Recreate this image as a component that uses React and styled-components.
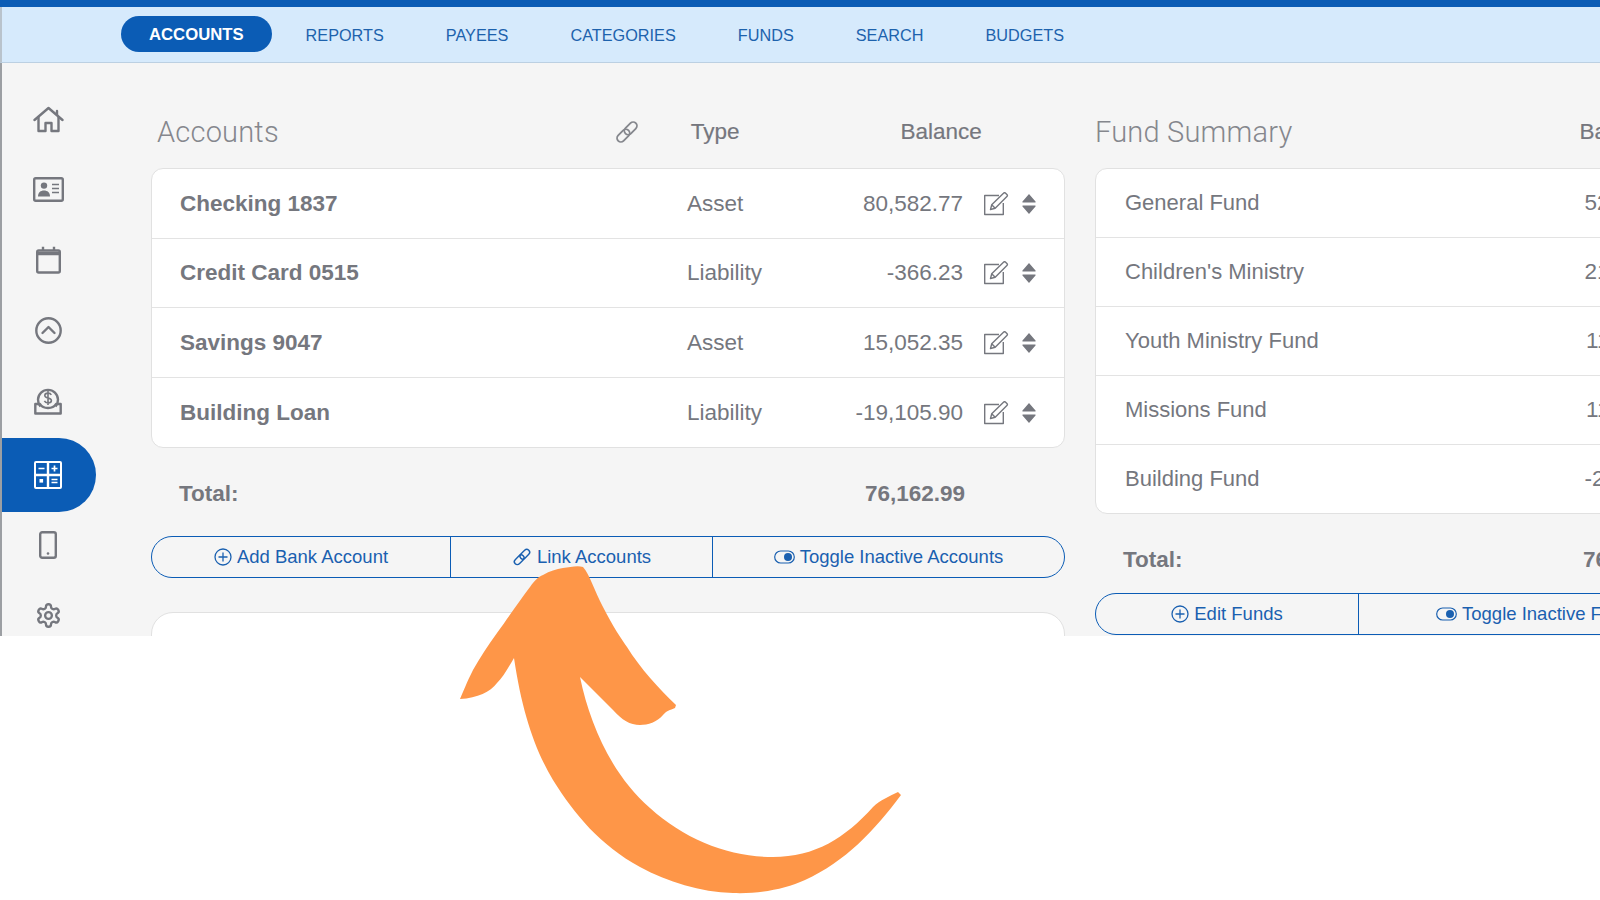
import React from 'react';
import styled, { createGlobalStyle } from 'styled-components';

const GlobalStyle = createGlobalStyle`
  html, body { margin: 0; padding: 0; background: #fff; }
  * { box-sizing: border-box; }
  body { font-family: "Liberation Sans", Arial, sans-serif; }
`;

const GREY = '#75777e';
const BLUE = '#0b5cb5';

const navItems = ['ACCOUNTS', 'REPORTS', 'PAYEES', 'CATEGORIES', 'FUNDS', 'SEARCH', 'BUDGETS'];

const accounts = [
  { name: 'Checking 1837', type: 'Asset', balance: '80,582.77' },
  { name: 'Credit Card 0515', type: 'Liability', balance: '-366.23' },
  { name: 'Savings 9047', type: 'Asset', balance: '15,052.35' },
  { name: 'Building Loan', type: 'Liability', balance: '-19,105.90' },
];

const funds = [
  { name: 'General Fund', balance: '52,318.40' },
  { name: "Children's Ministry", balance: '21,006.15' },
  { name: 'Youth Ministry Fund', balance: '11,272.09' },
  { name: 'Missions Fund', balance: '11,566.35' },
  { name: 'Building Fund', balance: '-20,000.00' },
];

const HomeIcon = () => (
  <svg width="31" height="27" viewBox="0 0 31 27" fill="none" stroke="currentColor" strokeWidth="2.4" strokeLinejoin="round" strokeLinecap="round">
    <path d="M1.5 14 15.5 2l14 12" />
    <path d="M5.5 11v14h7v-8h6v8h7V11" />
    <path d="M24 5v3.5" />
  </svg>
);

const CardIcon = () => (
  <svg width="31" height="25" viewBox="0 0 31 25" fill="none" stroke="currentColor" strokeWidth="2.4">
    <rect x="1.2" y="1.2" width="28.6" height="22.6" rx="1.5" />
    <circle cx="11" cy="8.6" r="3.2" fill="currentColor" stroke="none" />
    <path d="M5 19.5c0-4 2.5-6 6-6s6 2 6 6z" fill="currentColor" stroke="none" />
    <path d="M19 7.5h7M19 11.5h7M19 15.5h7" strokeWidth="1.5" />
  </svg>
);

const CalendarIcon = () => (
  <svg width="25" height="28" viewBox="0 0 25 28" fill="none" stroke="currentColor" strokeWidth="2.4">
    <rect x="1.2" y="4.5" width="22.6" height="22" rx="1.5" />
    <path d="M1.2 7.5h22.6" strokeWidth="3.5" />
    <path d="M7 .8v4M18 .8v4" strokeWidth="2.4" />
  </svg>
);

const UpIcon = () => (
  <svg width="27" height="27" viewBox="0 0 27 27" fill="none" stroke="currentColor" strokeWidth="2.4" strokeLinecap="round" strokeLinejoin="round">
    <circle cx="13.5" cy="13.5" r="12.2" />
    <path d="M7.5 16 13.5 10l6 6" />
  </svg>
);

const CoinIcon = () => (
  <svg width="28" height="28" viewBox="0 0 28 28" fill="none" stroke="currentColor" strokeWidth="2.4" strokeLinejoin="round">
    <path d="M6.5 19.5a10 10 0 1 1 15 0" />
    <path d="M6 17H1.3v9.5h25.4V17H22c-1.5 2.5-4.5 4-8 4s-6.500-1.500-8-4z" />
    <path d="M17.300 7.800c-.6-1.200-1.800-1.700-3.300-1.700-1.800 0-3.200.9-3.200 2.400 0 3.300 6.600 1.500 6.600 4.900 0 1.600-1.500 2.500-3.400 2.500-1.700 0-3-.7-3.600-2M14 4v14" strokeWidth="1.6" />
  </svg>
);

const CalculatorIcon = () => (
  <svg width="28" height="28" viewBox="0 0 28 28" fill="none" stroke="#fff" strokeWidth="2">
    <rect x="1" y="1" width="26" height="26" rx="1" />
    <path d="M14 1v26M1 14h26" strokeWidth="2.4" />
    <path d="M4.500 7.500h6M17.500 7.500h6M20.500 4.500v6M17.500 18.500h6M17.500 21.500h6" strokeWidth="1.7" />
    <rect x="5.500" y="18" width="3.600" height="3.600" fill="#fff" stroke="none" />
  </svg>
);

const PhoneIcon = () => (
  <svg width="18" height="28" viewBox="0 0 18 28" fill="none" stroke="currentColor" strokeWidth="2.4">
    <rect x="1.200" y="1.200" width="15.600" height="25.600" rx="2" />
    <circle cx="9" cy="22.500" r="1.300" fill="currentColor" stroke="none" />
  </svg>
);

const GearIcon = () => (
  <svg width="27" height="27" viewBox="0 0 24 24" fill="none" stroke="currentColor" strokeWidth="2.1" strokeLinecap="round" strokeLinejoin="round">
    <path d="M12.220 2h-.44a2 2 0 0 0-2 2v.18a2 2 0 0 1-1 1.730l-.43.250a2 2 0 0 1-2 0l-.150-.080a2 2 0 0 0-2.730.730l-.220.380a2 2 0 0 0 .730 2.730l.150.100a2 2 0 0 1 1 1.720v.510a2 2 0 0 1-1 1.740l-.150.090a2 2 0 0 0-.730 2.730l.220.380a2 2 0 0 0 2.730.730l.150-.080a2 2 0 0 1 2 0l.430.250a2 2 0 0 1 1 1.730V20a2 2 0 0 0 2 2h.440a2 2 0 0 0 2-2v-.180a2 2 0 0 1 1-1.730l.430-.250a2 2 0 0 1 2 0l.150.080a2 2 0 0 0 2.730-.730l.220-.390a2 2 0 0 0-.730-2.730l-.150-.080a2 2 0 0 1-1-1.740v-.500a2 2 0 0 1 1-1.740l.150-.090a2 2 0 0 0 .730-2.730l-.220-.380a2 2 0 0 0-2.730-.730l-.150.080a2 2 0 0 1-2 0l-.430-.250a2 2 0 0 1-1-1.730V4a2 2 0 0 0-2-2z" />
    <circle cx="12" cy="12" r="3" />
  </svg>
);

const LinkIcon = ({ size = 24 }) => (
  <svg width={size} height={size} viewBox="0 0 24 24" fill="none" stroke="currentColor" strokeWidth="1.700">
    <g transform="rotate(-45 12 12)">
      <rect x="0.500" y="8.500" width="13.500" height="7" rx="3.500" />
      <rect x="10" y="8.500" width="13.500" height="7" rx="3.500" />
    </g>
  </svg>
);

const PlusIcon = () => (
  <svg width="18" height="18" viewBox="0 0 18 18" fill="none" stroke="currentColor" strokeWidth="1.300">
    <circle cx="9" cy="9" r="8" />
    <path d="M9 4.500v9M4.500 9h9" />
  </svg>
);

const ToggleIcon = () => (
  <svg width="21" height="14" viewBox="0 0 21 14" fill="none" stroke="currentColor" strokeWidth="1.200">
    <rect x="0.700" y="1" width="19.600" height="12" rx="6" />
    <circle cx="14" cy="7" r="4" fill="currentColor" stroke="none" />
  </svg>
);

const EditIcon = () => (
  <svg width="26" height="24" viewBox="0 0 26 24" fill="none" stroke="currentColor" strokeWidth="1.400" strokeLinejoin="round">
    <path d="M16 3.500H1.700v19h18.600V11" />
    <path d="M7.500 17.500l1.200-4.700L20.500 1.200a1.500 1.500 0 0 1 2.100 0l1.300 1.300a1.500 1.500 0 0 1 0 2.100L12.200 16.300z" />
    <path d="M8.700 12.800l3.500 3.500" />
  </svg>
);

const SortIcon = () => (
  <svg width="14" height="20" viewBox="0 0 14 20" fill="currentColor">
    <path d="M7 0l6.500 7.500a.6.600 0 0 1-.5 1H1a.6.600 0 0 1-.5-1z" />
    <path d="M7 20 .5 12.500a.6.600 0 0 1 .5-1h12a.6.600 0 0 1 .5 1z" />
  </svg>
);

const sideIcons = [
  { key: 'home', icon: <HomeIcon /> },
  { key: 'people', icon: <CardIcon /> },
  { key: 'calendar', icon: <CalendarIcon /> },
  { key: 'up', icon: <UpIcon /> },
  { key: 'giving', icon: <CoinIcon /> },
  { key: 'accounting', icon: <CalculatorIcon />, active: true },
  { key: 'phone', icon: <PhoneIcon /> },
  { key: 'settings', icon: <GearIcon /> },
];

const App = () => {
  return (
    <Page>
      <GlobalStyle />
      <Frame>
        <TopStripe />
        <NavBar>
          {navItems.map((item, i) => (
            <NavItem key={item} $active={i === 0}>{item}</NavItem>
          ))}
        </NavBar>
        <Body>
          <Sidebar>
            {sideIcons.map((item) => (
              <SideItem key={item.key} $active={item.active}>{item.icon}</SideItem>
            ))}
          </Sidebar>
          <Main>
            <Column>
              <HeaderRow>
                <Title $inset>Accounts</Title>
                <HeaderLink><LinkIcon size={26} /></HeaderLink>
                <HeaderType>Type</HeaderType>
                <HeaderBalance>Balance</HeaderBalance>
              </HeaderRow>
              <Card>
                {accounts.map((a) => (
                  <AccountRow key={a.name}>
                    <AccountName>{a.name}</AccountName>
                    <AccountType>{a.type}</AccountType>
                    <Amount>{a.balance}</Amount>
                    <EditSlot><EditIcon /></EditSlot>
                    <SortSlot><SortIcon /></SortSlot>
                  </AccountRow>
                ))}
              </Card>
              <TotalRow>
                <TotalLabel>Total:</TotalLabel>
                <TotalValue>76,162.99</TotalValue>
              </TotalRow>
              <ButtonGroup $top={26} $columns="299px 262px 1fr">
                <GroupButton><PlusIcon />Add Bank Account</GroupButton>
                <GroupButton><LinkIcon size={20} />Link Accounts</GroupButton>
                <GroupButton><ToggleIcon />Toggle Inactive Accounts</GroupButton>
              </ButtonGroup>
              <EmptyCard />
            </Column>
            <Column>
              <HeaderRow>
                <Title>Fund Summary</Title>
                <FundHeaderBalance>Balance</FundHeaderBalance>
              </HeaderRow>
              <Card>
                {funds.map((f) => (
                  <FundRow key={f.name}>
                    <FundName>{f.name}</FundName>
                    <FundAmount>{f.balance}</FundAmount>
                  </FundRow>
                ))}
              </Card>
              <TotalRow>
                <TotalLabel>Total:</TotalLabel>
                <FundTotalValue>76,162.99</FundTotalValue>
              </TotalRow>
              <ButtonGroup $top={17} $columns="263px 360px">
                <GroupButton><PlusIcon />Edit Funds</GroupButton>
                <GroupButton><ToggleIcon />Toggle Inactive Funds</GroupButton>
              </ButtonGroup>
            </Column>
          </Main>
        </Body>
      </Frame>
      <Arrow viewBox="455 560 450 340">
        <path
          fill="#fe9648"
          d="M583 567 C590 575 594 590 603 607 C612 625 622 640 627 647 C640 668 660 690 676 705 L675 708 C670 710 666 711 663 715 C657 722 648 725 640 725 C630 725 622 720 613 710 L580 677 C590 725 612 775 650 808 C685 840 730 857 773 857 C815 857 845 838 873 807 C880 800 890 796 898 792 L901 795 C875 830 845 862 805 880 C785 889 760 894 733 893 C700 892 668 882 640 867 C600 845 575 815 553 780 C535 750 522 712 514 658 C508 668 503 677 497 683 C490 692 478 698 460 699 C463 692 467 682 473 670 C480 658 488 645 497 633 C510 615 520 600 530 587 C535 580 538 577 543 575 C550 571 556 569 563 568 C570 567 578 565 583 567 Z"
        />
      </Arrow>
    </Page>
  );
};

const Page = styled.div`
  position: relative;
  width: 1600px;
  height: 900px;
  background: #fff;
  overflow: hidden;
`;

const Frame = styled.div`
  height: 636px;
  background: #f5f5f5;
  overflow: hidden;
`;

const TopStripe = styled.div`
  height: 7px;
  background: ${BLUE};
`;

const NavBar = styled.nav`
  display: flex;
  align-items: center;
  gap: 6px;
  height: 56px;
  padding: 0 0 1px 119px;
  background: #d6eafc;
  border-left: 2px solid #b9c3cc;
  border-bottom: 1px solid #bcd0e2;
`;

const NavItem = styled.a`
  display: flex;
  align-items: center;
  height: 36px;
  padding: 2px 28px 0;
  border-radius: 18px;
  font-size: ${(p) => (p.$active ? '16.7px' : '16.25px')};
  font-weight: ${(p) => (p.$active ? 700 : 400)};
  color: ${(p) => (p.$active ? '#fff' : '#1d62ad')};
  background: ${(p) => (p.$active ? BLUE : 'transparent')};
`;

const Body = styled.div`
  display: flex;
  height: 573px;
  border-left: 2px solid #9c9fa3;
`;

const Sidebar = styled.aside`
  flex: 0 0 96px;
  display: flex;
  flex-direction: column;
  padding: 21px 2px 0 0;
  color: ${GREY};
`;

const SideItem = styled.div`
  flex: 0 0 ${(p) => (p.$active ? '74px' : '70.4px')};
  margin: ${(p) => (p.$active ? '2px 0 -2px' : '0')};
  display: flex;
  align-items: center;
  justify-content: center;
  padding-right: 2px;
  border-radius: 0 37px 37px 0;
  background: ${(p) => (p.$active ? BLUE : 'transparent')};
`;

const Main = styled.main`
  display: flex;
  gap: 30px;
  padding: 42px 0 0 53px;
`;

const Column = styled.section`
  flex: 0 0 914px;
`;

const HeaderRow = styled.div`
  display: flex;
  align-items: center;
  height: 54px;
  margin-bottom: 9px;
  color: ${GREY};
  font-size: 22.5px;
  -webkit-text-stroke: 0.2px ${GREY};
`;

const Title = styled.h2`
  margin: 0;
  padding-left: ${(p) => (p.$inset ? '6px' : '0')};
  font-family: Roboto, "Liberation Sans", sans-serif;
  font-size: 29px;
  font-weight: 300;
  letter-spacing: 0.2px;
  color: #85878d;
  -webkit-text-stroke: 0;
`;

const HeaderLink = styled.span`
  display: flex;
  margin-left: 335px;
  color: #85878d;
`;

const HeaderType = styled.span`
  margin-left: 51px;
`;

const HeaderBalance = styled.span`
  margin-left: 161px;
`;

const FundHeaderBalance = styled.span`
  margin-left: 287px;
`;

const Card = styled.div`
  background: #fff;
  border: 1.5px solid #e1e1e1;
  border-radius: 12px;
  overflow: hidden;
`;

const AccountRow = styled.div`
  display: flex;
  align-items: center;
  height: 69.5px;
  padding: 1px 0 0 28px;
  border-bottom: 1.5px solid #e3e3e3;
  color: ${GREY};
  font-size: 22.5px;
  &:last-child { height: 69.5px; border-bottom: 0; }
`;

const AccountName = styled.span`
  flex: 0 0 507px;
  font-weight: 700;
`;

const AccountType = styled.span`
  flex: 1;
`;

const Amount = styled.span`
  text-align: right;
`;

const EditSlot = styled.span`
  display: flex;
  margin-left: 20px;
`;

const SortSlot = styled.span`
  display: flex;
  margin: 0 28px 0 13px;
`;

const FundRow = styled.div`
  display: flex;
  align-items: center;
  height: 69px;
  padding-left: 29px;
  border-bottom: 1.5px solid #e3e3e3;
  color: ${GREY};
  font-size: 22.5px;
  &:last-child { height: 67.5px; border-bottom: 0; }
`;

const FundName = styled.span`
  flex: 0 0 459.5px;
  font-size: 22px;
`;

const FundAmount = styled.span`
  width: 100px;
  text-align: right;
`;

const TotalRow = styled.div`
  display: flex;
  padding: 30px 0 0 28px;
  line-height: 32px;
  color: ${GREY};
  font-size: 22.5px;
  font-weight: 700;
`;

const TotalLabel = styled.span`
  flex: 0 0 460px;
`;

const TotalValue = styled.span`
  margin-left: 226px;
`;

const FundTotalValue = styled.span`
  width: 100px;
  text-align: right;
`;

const ButtonGroup = styled.div`
  display: grid;
  grid-template-columns: ${(p) => p.$columns};
  height: 42px;
  margin-top: ${(p) => p.$top}px;
  border: 1.7px solid ${BLUE};
  border-radius: 21px;
  overflow: hidden;
`;

const GroupButton = styled.button`
  display: flex;
  align-items: center;
  justify-content: center;
  gap: 5px;
  padding: 0;
  border: 0;
  border-right: 1.7px solid ${BLUE};
  background: transparent;
  color: #1a60b0;
  font-family: inherit;
  font-size: 18.5px;
  &:last-child { border-right: 0; }
`;

const EmptyCard = styled.div`
  height: 80px;
  margin-top: 34px;
  background: #fff;
  border: 1.5px solid #e1e1e1;
  border-radius: 22px 22px 0 0;
`;

const Arrow = styled.svg`
  position: absolute;
  left: 455px;
  top: 560px;
  width: 450px;
  height: 340px;
`;

export default App;
